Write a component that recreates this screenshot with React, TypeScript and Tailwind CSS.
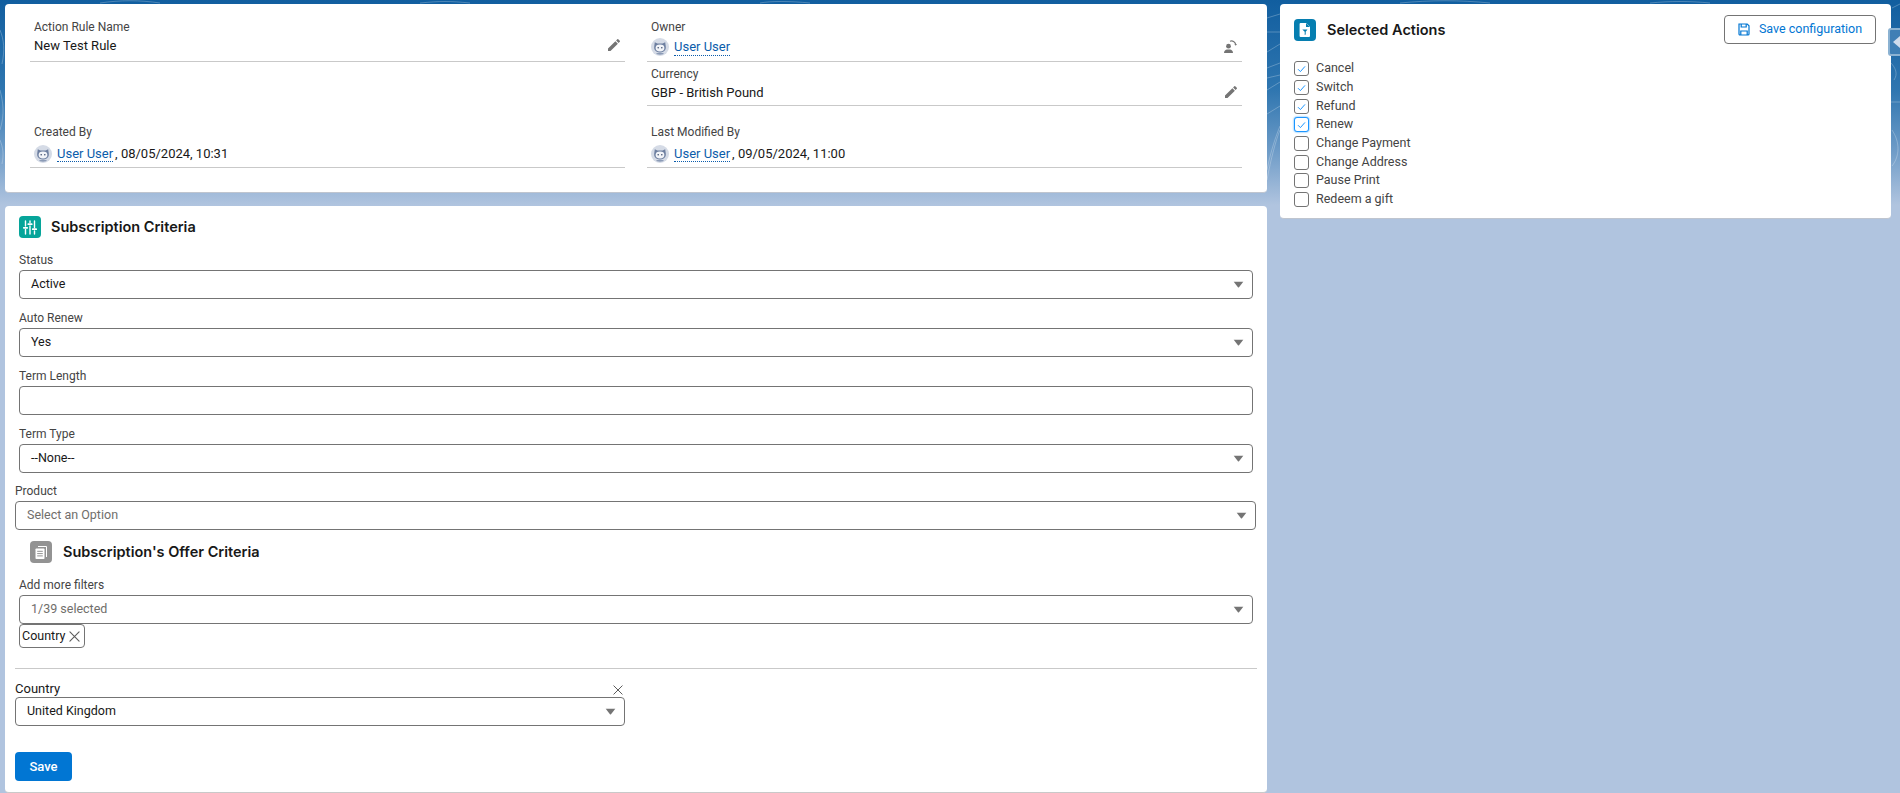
import React from "react";
import { MdEdit } from "react-icons/md";

const Pencil = () => <MdEdit className="text-[16px] text-[#747474] -mt-[2px] translate-x-[1px]" />;

const Caret = () => (
  <svg width="11" height="7" viewBox="0 0 12 8" className="shrink-0">
    <path d="M0.5 0.8h11L6.6 7.2a.8.8 0 0 1-1.2 0z" fill="#747474" />
  </svg>
);

const Close = ({ size = 11 }: { size?: number }) => (
  <svg width={size} height={size} viewBox="0 0 12 12" className="shrink-0">
    <path d="M1 1l10 10M11 1L1 11" stroke="#5c5c5c" strokeWidth="1.2" strokeLinecap="round" />
  </svg>
);

const Avatar = () => (
  <svg width="18" height="18" viewBox="0 0 18 18" className="shrink-0">
    <circle cx="9" cy="9" r="9" fill="#d5dbe6" />
    <path d="M3.8 4.2l2.6 1.4h5.2l2.6-1.4.6 4.6c.4 3.4-2 5.6-5.8 5.6s-6.2-2.2-5.8-5.6z" fill="#6d7fa0" />
    <ellipse cx="9" cy="10" rx="4.4" ry="3.4" fill="#f2f4f8" />
    <circle cx="7.2" cy="9.8" r=".8" fill="#3f506f" />
    <circle cx="10.8" cy="9.8" r=".8" fill="#3f506f" />
    <path d="M5 15.6c1-1.3 7-1.3 8 0-2 1.6-6 1.6-8 0z" fill="#8b9bb6" />
  </svg>
);

const ChangeOwner = () => (
  <svg width="15" height="14" viewBox="0 0 15 14">
    <circle cx="5.5" cy="6.2" r="2.4" fill="#747474" />
    <path d="M1 13c0-2.4 1.6-3 3-3.4h3c1.4.4 3 1 3 3.4z" fill="#747474" />
    <path d="M7 1.2c2.6-.8 5 .4 5.6 3" fill="none" stroke="#747474" strokeWidth="1.2" />
    <path d="M11.4 4h2.6l-1.3 1.8z" fill="#747474" />
  </svg>
);

const UserLink = () => (
  <span className="text-[#0b5cab] border-b border-dotted border-[#0b5cab] leading-[16px] mr-[2px]">User User</span>
);

const Field = ({ label, children, action, className = "", valueClass = "" }: { label: string; children: React.ReactNode; action?: React.ReactNode; className?: string; valueClass?: string }) => (
  <div className={`h-[44px] border-b border-[#c9c9c9] px-[4px] ${className}`}>
    <div className="text-[12px] leading-[18px] text-[#444444]">{label}</div>
    <div className={`flex items-center justify-between text-[13px] text-[#181818] leading-[19px] ${valueClass}`}>
      <div className="flex items-center gap-[5px]">{children}</div>
      {action && <span>{action}</span>}
    </div>
  </div>
);

const SelectField = ({ label, value, muted, caret = true, className = "" }: { label: string; value?: string; muted?: boolean; caret?: boolean; className?: string }) => (
  <div className={className}>
    <div className="text-[12px] leading-[18px] text-[#444444] mb-[1px]">{label}</div>
    <div className="h-[29px] flex items-center justify-between bg-white border border-[#747474] rounded-[4px] pl-[11px] pr-[8px]">
      <span className={`text-[12.5px] ${muted ? "text-[#706e6b]" : "text-[#181818]"}`}>{value}</span>
      {caret && <Caret />}
    </div>
  </div>
);

const IconTile = ({ color, children }: { color: string; children: React.ReactNode }) => (
  <div className={`w-[22px] h-[22px] rounded-[4px] flex items-center justify-center shrink-0 ${color}`}>{children}</div>
);

const actions = [
  { name: "Cancel", checked: true, gap: "mb-[4px]" },
  { name: "Switch", checked: true, gap: "mb-[4px]" },
  { name: "Refund", checked: true, gap: "mb-[3px]" },
  { name: "Renew", checked: true, focus: true, gap: "mb-[4px]" },
  { name: "Change Payment", checked: false, gap: "mb-[4px]" },
  { name: "Change Address", checked: false, gap: "mb-[3px]" },
  { name: "Pause Print", checked: false, gap: "mb-[4px]" },
  { name: "Redeem a gift", checked: false, gap: "" },
];

const Backdrop = () => (
  <svg className="absolute top-0 left-0 w-full h-[215px] pointer-events-none" viewBox="0 0 1900 215" preserveAspectRatio="none" fill="none" stroke="#ffffff" strokeOpacity="0.25">
    <path d="M0 30c4 10 5 20 2 34M0 90c3 12 5 24 0 40M0 140c3 8 4 14 2 24" />
    <path d="M1267 18l13-4M1267 32h13M1267 52l13-8M1267 68l13-5M1267 78l13-3M1267 90l13-8M1267 114l13-8M1267 170c4-20 9-34 13-44M1267 180c4-22 9-40 13-50" />
    <path d="M1892 8l8-4M1890 62c6 6 8 12 4 18M1890 102h10M1892 130c8 12 8 26 0 36" />
    <path d="M100 3c20-3 40-3 60 0M420 3c20-2 30-2 50 0M760 3c10-2 30-2 50 0M1400 3c30-3 60-3 90 0M1650 3c20-2 40-2 60 0" />
  </svg>
);

const App: React.FC = () => {
  return (
    <div
      className="relative w-[1900px] h-[793px] overflow-hidden bg-[linear-gradient(to_bottom,#115e9f_0px,#2f76b0_90px,#6d9bc7_150px,#b0c4df_205px)] flex gap-[13px] pl-[5px] pt-[4px]"
      style={{ fontFamily: 'Roboto, "Liberation Sans", sans-serif' }}
    >
      <Backdrop />

      {/* left column */}
      <div className="relative w-[1262px] flex flex-col gap-[13px]">
        <div className="h-[189px] bg-white rounded-[4px] border-b border-[#bfc5cf] pt-[14px] px-[25px]">
          <div className="grid grid-cols-[595px_595px] gap-x-[22px]">
            <Field label="Action Rule Name" action={<Pencil />}>New Test Rule</Field>
            <Field label="Owner" action={<ChangeOwner />} valueClass="mt-[2px]">
              <Avatar />
              <UserLink />
            </Field>
            <div />
            <Field label="Currency" action={<Pencil />} className="pt-[3px]">GBP - British Pound</Field>
            <Field label="Created By" className="mt-[17px] h-[45px]" valueClass="mt-[3px]">
              <Avatar />
              <span><UserLink />, 08/05/2024, 10:31</span>
            </Field>
            <Field label="Last Modified By" className="mt-[17px] h-[45px]" valueClass="mt-[3px]">
              <Avatar />
              <span><UserLink />, 09/05/2024, 11:00</span>
            </Field>
          </div>
        </div>

        <div className="flex-1 bg-white rounded-[4px] border-b border-[#c9c9c9] pt-[10px]">
          <div className="flex items-center gap-[10px] pl-[14px]">
            <IconTile color="bg-[#06a59a]">
              <svg width="14" height="15" viewBox="0 0 14 15" fill="none" stroke="#ffffff" strokeWidth="1.4" strokeLinecap="round">
                <path d="M2.5 1v5M2.5 9.5V14M7 1v1.5M7 6v8M11.5 1v6.5M11.5 11v3" />
                <path d="M.8 7.8h3.4M5.3 4.2h3.4M9.8 9.2h3.4" strokeWidth="1.8" />
              </svg>
            </IconTile>
            <h2 className="font-['Inter'] text-[14.5px] font-semibold text-[#181818]">Subscription Criteria</h2>
          </div>

          <div className="mt-[13px] flex flex-col gap-[10px] px-[14px]">
            <SelectField label="Status" value="Active" />
            <SelectField label="Auto Renew" value="Yes" />
            <SelectField label="Term Length" caret={false} />
            <SelectField label="Term Type" value="--None--" />
          </div>

          <SelectField label="Product" value="Select an Option" muted className="mt-[9px] ml-[10px] mr-[11px]" />

          <div className="flex items-center gap-[11px] pl-[25px] mt-[11px]">
            <IconTile color="bg-[#939393]">
              <svg width="14" height="15" viewBox="0 0 14 15" fill="none" stroke="#ffffff" strokeWidth="1">
                <path d="M4 1.5h8.5v10.5" />
                <rect x="1.5" y="3.5" width="9" height="10.5" rx=".8" fill="#ffffff" stroke="none" />
                <path d="M3.2 6.3h5.6M3.2 8.6h5.6M3.2 10.9h5.6" stroke="#939393" />
              </svg>
            </IconTile>
            <h2 className="font-['Inter'] text-[14.5px] font-semibold text-[#181818]">Subscription's Offer Criteria</h2>
          </div>

          <div className="px-[14px] mt-[13px]">
            <SelectField label="Add more filters" value="1/39 selected" muted />
            <div className="flex items-center justify-between w-[66px] h-[24px] pl-[2px] pr-[4px] border border-[#747474] rounded-[4px] text-[12.5px] text-[#181818] bg-white">
              Country
              <Close />
            </div>
          </div>

          <div className="mt-[20px] mx-[10px] border-t border-[#c9c9c9]" />

          <div className="ml-[10px] w-[610px] mt-[11px]">
            <div className="flex items-center justify-between h-[17px]">
              <span className="text-[13px] text-[#181818]">Country</span>
              <span className="mr-[2px] mt-[2px]"><Close size={10} /></span>
            </div>
            <div className="h-[29px] flex items-center justify-between bg-white border border-[#747474] rounded-[4px] pl-[11px] pr-[8px]">
              <span className="text-[12.5px] text-[#181818]">United Kingdom</span>
              <Caret />
            </div>
          </div>

          <button className="ml-[10px] mt-[26px] w-[57px] h-[29px] rounded-[4px] bg-[#0176d3] text-white text-[13px] font-medium">Save</button>
        </div>
      </div>

      {/* right column */}
      <div className="relative w-[611px] h-[215px] bg-white rounded-[4px] border-b border-[#bfc5cf] pt-[11px] pl-[14px] pr-[15px]">
        <div className="flex items-center justify-between">
          <div className="flex items-center gap-[11px]">
            <IconTile color="bg-[#067eb0]">
              <svg width="14" height="16" viewBox="0 0 14 16">
                <path d="M2.6 1h5.6L12 4.8v9.2a1 1 0 0 1-1 1H2.6a1 1 0 0 1-1-1V2a1 1 0 0 1 1-1z" fill="#ffffff" />
                <path d="M8 1v4h4z" fill="#067eb0" />
                <path d="M4.3 7.6h5.2L7.7 9.8v2.6l-1 .5V9.8z" fill="#067eb0" />
              </svg>
            </IconTile>
            <h2 className="font-['Inter'] text-[14.5px] font-semibold text-[#181818]">Selected Actions</h2>
          </div>
          <button className="w-[152px] h-[29px] flex items-center justify-center gap-[9px] border border-[#747474] rounded-[4px] bg-white text-[#0176d3] text-[12.5px]">
            <svg width="12" height="13" viewBox="0 0 12 13" fill="none" stroke="#0176d3" strokeWidth="1.2">
              <path d="M1 1h8.2L11 2.8V11a1 1 0 0 1-1 1H2a1 1 0 0 1-1-1z" />
              <path d="M3.2 1v3h5V1M2.8 12V8h6.4v4" />
            </svg>
            Save configuration
          </button>
        </div>

        <div className="mt-[17px] flex flex-col">
          {actions.map((a) => (
            <div key={a.name} className={`flex items-center gap-[7px] h-[15px] ${a.gap}`}>
              <span
                className={`w-[15px] h-[15px] rounded-[3px] bg-white border flex items-center justify-center ${
                  a.focus ? "border-[#1b96ff] shadow-[0_0_2px_#1b96ff]" : "border-[#747474]"
                }`}
              >
                {a.checked && (
                  <svg width="9" height="8" viewBox="0 0 9 8" fill="none" stroke="#1b96ff" strokeWidth="1">
                    <path d="M1 4.2l2.4 2.4L8 1.4" />
                  </svg>
                )}
              </span>
              <span className="text-[12.5px] text-[#444444]">{a.name}</span>
            </div>
          ))}
        </div>
      </div>

      {/* panel handle at the right edge */}
      <div className="absolute top-[28px] left-[1888px] w-[14px] h-[28px] border-2 border-[#ffffff66] rounded-l-[3px] bg-[#3f7fb5] flex items-center pl-[3px]">
        <span className="w-0 h-0 border-y-[6px] border-y-transparent border-r-[7px] border-r-[#cfdcec]" />
      </div>
    </div>
  );
};

export default App;
